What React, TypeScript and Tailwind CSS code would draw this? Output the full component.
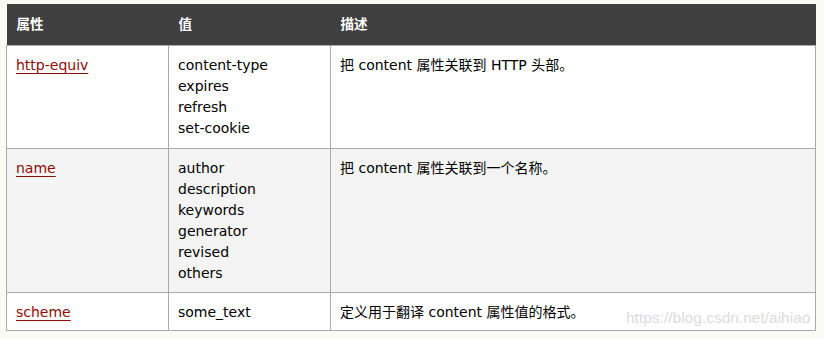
const rows = [
  {
    name: "http-equiv",
    values: ["content-type", "expires", "refresh", "set-cookie"],
    desc: "把 content 属性关联到 HTTP 头部。",
    bg: "bg-white",
    h: "h-[103px]",
  },
  {
    name: "name",
    values: ["author", "description", "keywords", "generator", "revised", "others"],
    desc: "把 content 属性关联到一个名称。",
    bg: "bg-[#f4f4f4]",
    h: "h-[144px]",
  },
  {
    name: "scheme",
    values: ["some_text"],
    desc: "定义用于翻译 content 属性值的格式。",
    bg: "bg-white",
    h: "h-[38px]",
  },
];

export default function App() {
  return (
    <div className="relative w-[824px] h-[339px] bg-[#fbfbf6] pt-[4px] pl-[6px] font-['DejaVu_Sans','Noto_Sans_CJK_SC',sans-serif] text-[14px] leading-[21px] text-black">
      <table className="w-[810px] border-collapse table-fixed">
        <thead>
          <tr className="bg-[#404040] text-white h-[41px] text-[13.5px]">
            <th className="w-[162px] text-left font-bold px-[10px] align-middle">属性</th>
            <th className="w-[162px] text-left font-bold px-[10px] align-middle">值</th>
            <th className="text-left font-bold px-[10px] align-middle">描述</th>
          </tr>
        </thead>
        <tbody>
          {rows.map((r) => (
            <tr key={r.name} className={`${r.bg} ${r.h}`}>
              <td className="border border-[#aaaaaa] align-top px-[9px] pt-[9px]">
                <a href="#" className="text-[#900b09] underline underline-offset-[3px]">
                  {r.name}
                </a>
              </td>
              <td className="border border-[#aaaaaa] align-top px-[9px] pt-[9px]">
                {r.values.map((v) => (
                  <div key={v}>{v}</div>
                ))}
              </td>
              <td className="border border-[#aaaaaa] align-top px-[9px] pt-[9px]">
                {r.desc}
              </td>
            </tr>
          ))}
        </tbody>
      </table>
      <div className="absolute left-[626px] top-[308px] font-['Liberation_Sans',sans-serif] text-[15.5px] leading-[20px] text-[#dcdcdc]">
        https://blog.csdn.net/aihiao
      </div>
    </div>
  );
}
